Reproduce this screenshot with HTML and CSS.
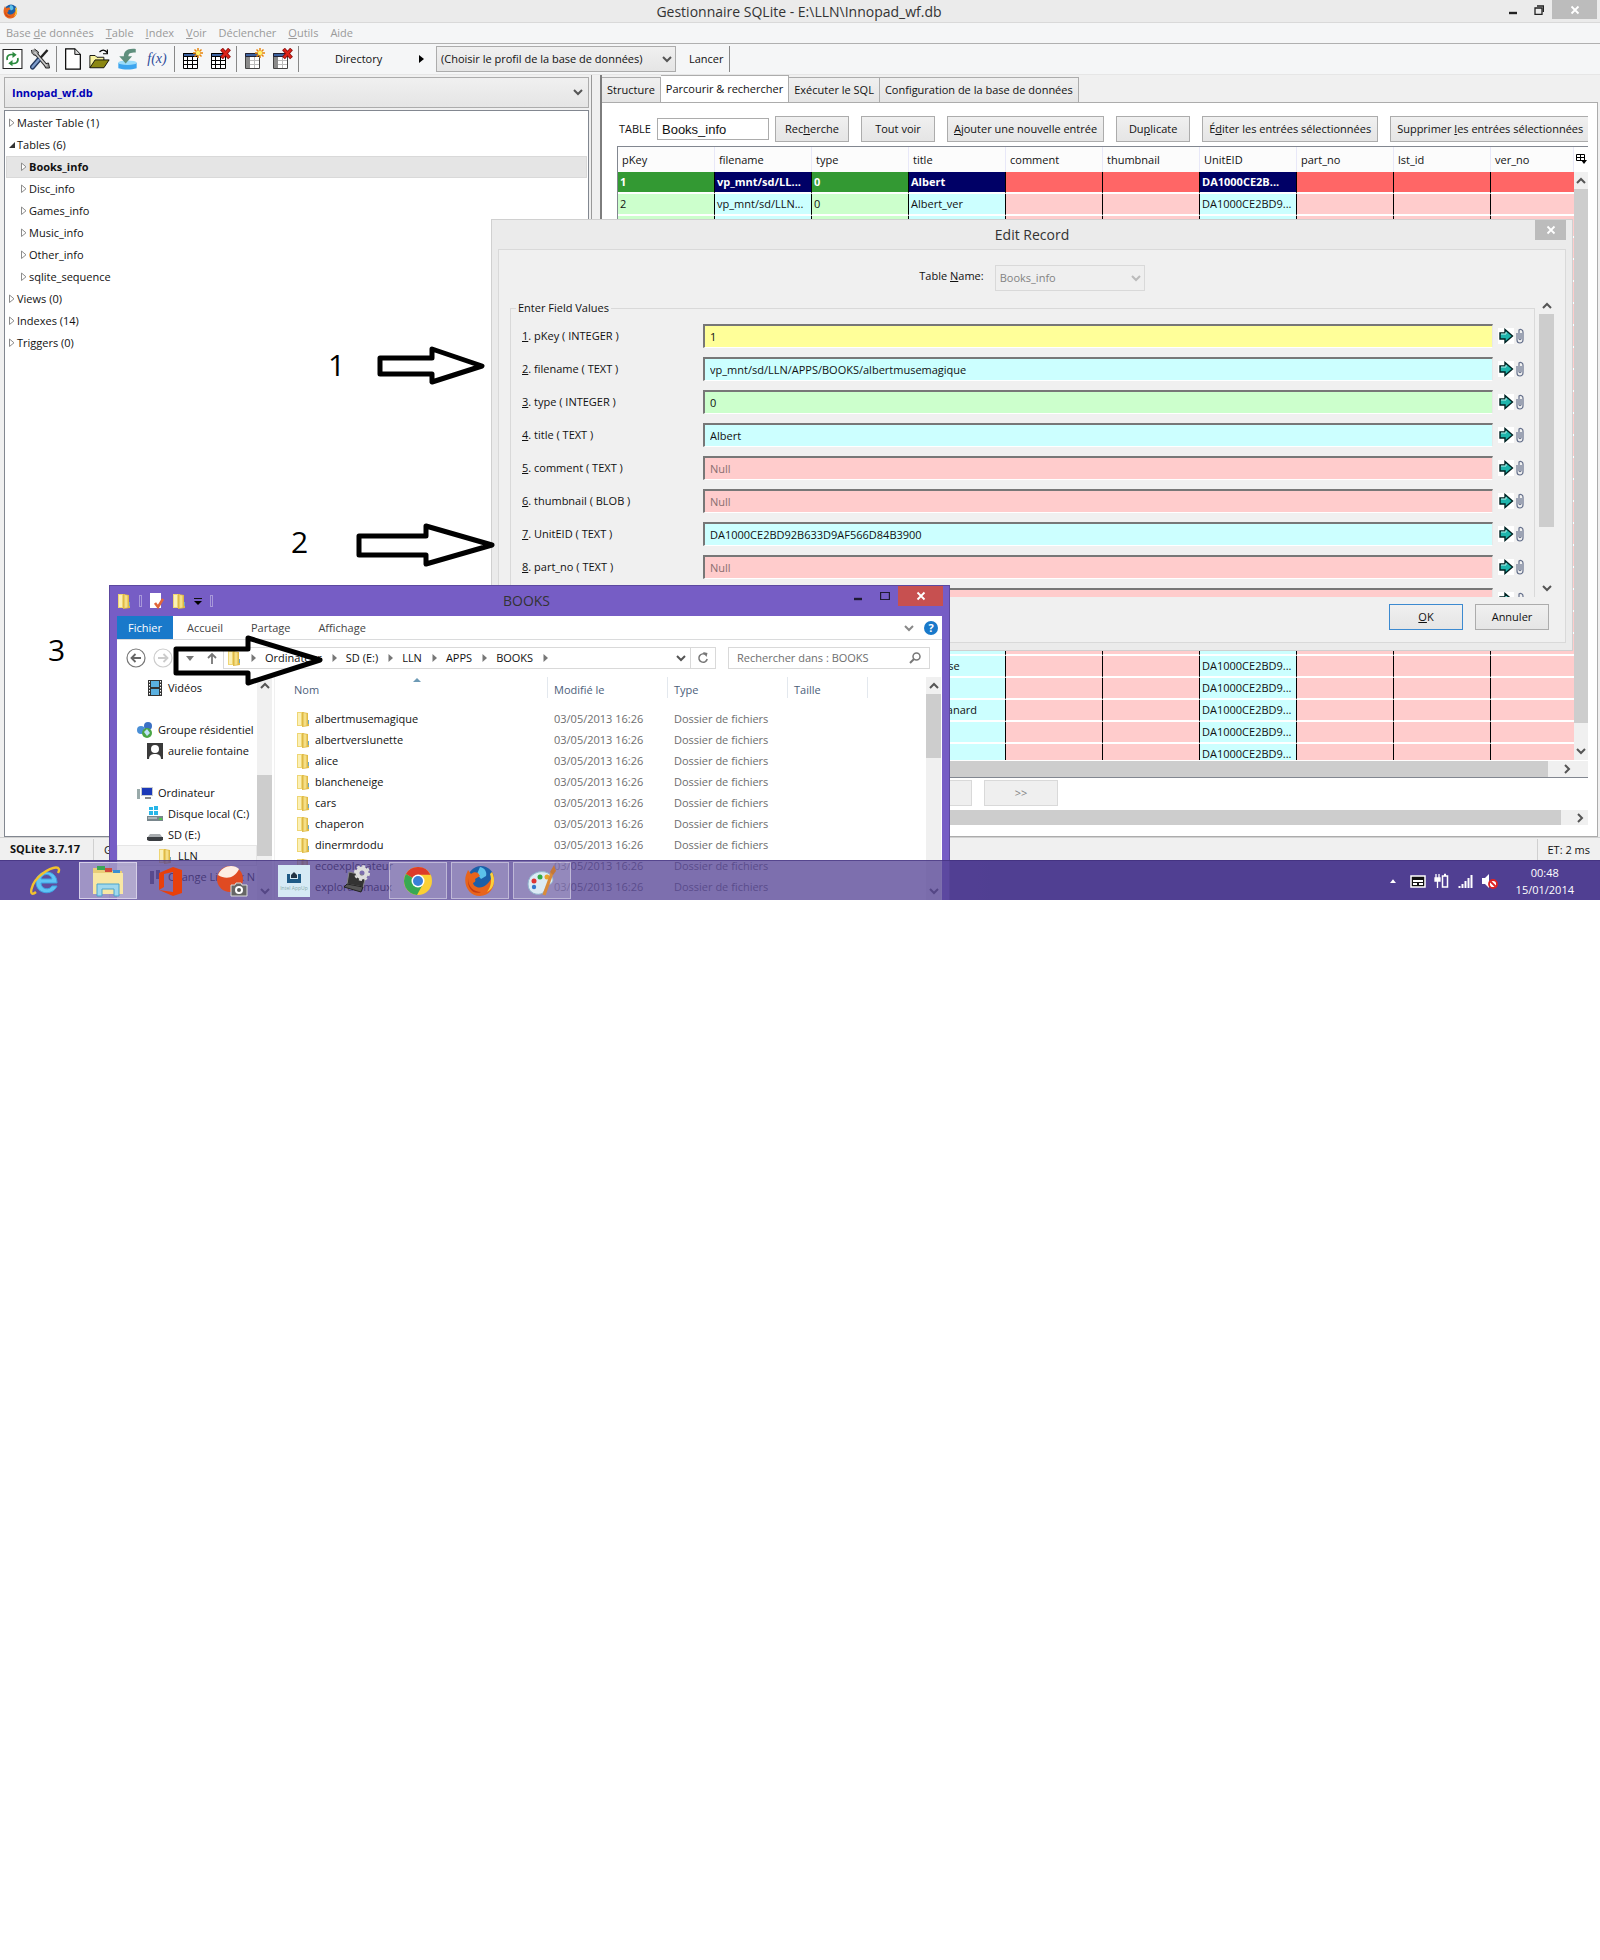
FILE: index.html
```html
<!DOCTYPE html>
<html lang="fr">
<head>
  <meta charset="UTF-8" />
  <meta name="viewport" content="width=device-width, initial-scale=1.0" />
  <title>Gestionnaire SQLite</title>
  <link rel="stylesheet" href="styles.css">
</head>
<body>

  <!-- shared icons -->
  <svg class="sprite" aria-hidden="true">
    <symbol id="chev-down" viewBox="0 0 10 10"><path d="M1 3l4 4 4-4" fill="none" stroke="currentColor" stroke-width="2"/></symbol>
    <symbol id="chev-up" viewBox="0 0 10 10"><path d="M1 7l4-4 4 4" fill="none" stroke="currentColor" stroke-width="2"/></symbol>
    <symbol id="chev-right" viewBox="0 0 10 10"><path d="M3 1l4 4-4 4" fill="none" stroke="currentColor" stroke-width="2"/></symbol>
    <symbol id="cross" viewBox="0 0 10 10"><path d="M1.500 1.500l7 7M8.500 1.500l-7 7" stroke="currentColor" stroke-width="1.800"/></symbol>
    <symbol id="minimize" viewBox="0 0 10 10"><path d="M1 8h8" stroke="currentColor" stroke-width="2.400"/></symbol>
    <symbol id="twisty" viewBox="0 0 6 10"><path d="M.5 1v7.500L5 4.800z" fill="#fff" stroke="#8c8c8c"/></symbol>
    <symbol id="twisty-open" viewBox="0 0 6 10"><path d="M6 2v6H0z" fill="#333"/></symbol>
    <symbol id="crumb" viewBox="0 0 5 8"><path d="M.5 0v8L5 4z" fill="#777"/></symbol>
    <symbol id="folder" viewBox="0 0 14 16">
      <path d="M1 1h7v14H1z" fill="#efd674"/><path d="M2 2h3v12H2z" fill="#fbf0b6"/>
      <path d="M6 1l6 1v7h1v6l-7 1z" fill="#dfb945"/><path d="M7.500 2l3 .5v12l-3 .5z" fill="#f5df86"/>
      <path d="M12.500 9v4" stroke="#6fa9c4"/>
    </symbol>
    <symbol id="firefox" viewBox="0 0 32 32">
      <circle cx="17" cy="14" r="13" fill="#1c5fa8"/><path d="M16 2c5 1 7 5 6 9l-5 3-4-5z" fill="#5cc2ea"/>
      <path d="M28 7c5 10 1 23-12 24C5 31-1 20 2 10l2-5 3 4c2-2 5-2 7-1l2 3-5 3c1 2 0 3-2 4 1 5 9 6 13 2 5-4 6-8 6-13z" fill="#e8641b"/>
      <path d="M28 7c4 8 2 17-5 20 4-5 5-12 3-18z" fill="#fbd03b"/>
      <path d="M4 13c0 9 6 14 13 14-6 3-14-2-13-14z" fill="#c43a12"/>
    </symbol>
    <symbol id="grid-icon" viewBox="0 0 21 22">
      <path d="M1.500 5.500h14v15h-14z" fill="#fff" stroke="#000"/>
      <path d="M1.500 5.500h14v3h-14z" fill="#3c62a0" stroke="#000"/>
      <path d="M1 12.500h15M1 16.500h15M5.500 9v12M10.500 9v12" stroke="#000"/>
    </symbol>
    <symbol id="col-icon" viewBox="0 0 21 22">
      <path d="M1.500 5.500h14v15h-14z" fill="#fff" stroke="#444"/>
      <path d="M1.500 5.500h14v3h-14z" fill="#3c62a0" stroke="#223"/>
      <path d="M2 9h4v11H2z" fill="#8a8a8a"/>
      <path d="M6 12.500h9M6 16.500h9M10.500 9v11" stroke="#bbb"/>
    </symbol>
    <symbol id="spark" viewBox="0 0 21 22"><path d="M16 0v10M11 5h10M12.500 1.500l7 7M19.500 1.500l-7 7" stroke="#e8850c" stroke-width="1.500"/><circle cx="16" cy="5" r="2.200" fill="#fff36b"/></symbol>
    <symbol id="redx" viewBox="0 0 21 22"><path d="M11.500 1l8 9M19.500 1l-8 9" stroke="#8a0d0d" stroke-width="3.800"/><path d="M12 1.500l7 8M19 1.500l-7 8" stroke="#dc2418" stroke-width="2.200"/></symbol>
    <symbol id="go" viewBox="0 0 16 16">
      <path d="M0 0h16v16H0z" fill="#fff"/>
      <path d="M2 5h5V1.500L14.500 8 7 14.500V11H2z" fill="#1fb5ac" stroke="#022" stroke-width="1.400"/>
      <path d="M3 6h5V4" fill="none" stroke="#b5f3ee"/>
    </symbol>
    <symbol id="clip" viewBox="0 0 8 16"><path d="M1 5v7a3 3 0 006 0V4a2.500 2.500 0 00-4-2v9a1.200 1.200 0 002 0V5" fill="none" stroke="#66718c" stroke-width="1.200"/></symbol>
  </svg>

  <div class="desktop">

    <!-- main window -->
    <div class="app">
      <header class="titlebar">
        <svg class="app-icon"><use href="#firefox"/></svg>
        <h1>Gestionnaire SQLite - E:\LLN\Innopad_wf.db</h1>
        <div class="caption">
          <button aria-label="Réduire"><svg class="i10"><use href="#minimize"/></svg></button>
          <button aria-label="Restaurer"><svg class="i10" viewBox="0 0 10 10"><path d="M1 3h7v6.500H1z M3 1h6.500v6" fill="none" stroke="currentColor" stroke-width="1.300"/></svg></button>
          <button class="close" aria-label="Fermer"><svg class="i10"><use href="#cross"/></svg></button>
        </div>
      </header>

      <nav class="menubar">
        <a href="#">Base <u>d</u>e données</a>
        <a href="#"><u>T</u>able</a>
        <a href="#"><u>I</u>ndex</a>
        <a href="#"><u>V</u>oir</a>
        <a href="#">Déclencher</a>
        <a href="#"><u>O</u>utils</a>
        <a href="#">Aide</a>
      </nav>

      <div class="toolbar">
        <div class="tools first">
          <button aria-label="Actualiser"><svg viewBox="0 0 20 20"><path d="M1 1h18v18H1z" fill="#fff" stroke="#222"/><path d="M5 11c-1-4 2-6 6-5M15 9c1 4-2 6-6 5" fill="none" stroke="#2b8a3e" stroke-width="1.600"/><path d="M10 3l4 3-4 3zM10 11l-4 3 4 3z" fill="#2b8a3e"/></svg></button>
          <button aria-label="Options"><svg viewBox="0 0 20 22"><path d="M4 4l12 14" stroke="#333" stroke-width="3.600"/><path d="M1 2c0 4 2 6 6 5l1-3-4-3M14 16l1 4 4 0-1-5z" fill="#999" stroke="#222"/><path d="M17 2L9 11" stroke="#222" stroke-width="2.400"/><path d="M8 12l-6 7" stroke="#23395f" stroke-width="5" stroke-linecap="round"/><path d="M8 12l-6 7" stroke="#7d9ccb" stroke-width="2.400" stroke-linecap="round"/><path d="M4 4l12 14" stroke="#ccc" stroke-width="1.600"/></svg></button>
        </div>
        <div class="tools">
          <button class="w18" aria-label="Nouvelle base"><svg viewBox="0 0 18 24"><path d="M1 1h10l6 6v16H1z" fill="#fff" stroke="#000" stroke-width="1.300"/><path d="M11 1v6h6" fill="#ddd" stroke="#000"/></svg></button>
          <button aria-label="Ouvrir"><svg viewBox="0 0 24 24"><path d="M1 22V8h6l2 2h8v4" fill="#f8f3a0" stroke="#000"/><path d="M1 22l6-9h16l-6 9z" fill="#8b8712" stroke="#000"/><path d="M12 4c3-3 6-3 9 1M21 1v5h-5" fill="none" stroke="#000" stroke-width="1.300"/></svg></button>
          <button aria-label="Importer"><svg viewBox="0 0 20 24"><path d="M0 16h20v6c-6 2-14 2-20 0z" fill="#3da5ef"/><ellipse cx="10" cy="16" rx="10" ry="2.500" fill="#9adcfb"/><path d="M19 1C9 0 6 4 6 9H1l7 8 7-8h-4c0-3 2-4 8-4z" fill="#5f8f7d"/></svg></button>
          <button class="fx" aria-label="Fonctions">f(x)</button>
        </div>
        <div class="tools">
          <button aria-label="Créer une table"><svg><use href="#grid-icon"/><use href="#spark"/></svg></button>
          <button aria-label="Supprimer la table"><svg><use href="#grid-icon"/><use href="#redx"/></svg></button>
        </div>
        <div class="tools">
          <button aria-label="Créer un index"><svg><use href="#col-icon"/><use href="#spark"/></svg></button>
          <button aria-label="Supprimer l'index"><svg><use href="#col-icon"/><use href="#redx"/></svg></button>
        </div>
        <div class="directory">
          <label for="profile">Directory</label>
          <svg class="play" viewBox="0 0 5 8"><path d="M0 0v8l5-4z"/></svg>
          <span class="select profile">
            <select id="profile"><option>(Choisir le profil de la base de données)</option></select>
            <svg class="i10"><use href="#chev-down"/></svg>
          </span>
          <button class="launch">Lancer</button>
        </div>
      </div>

      <div class="workspace">
        <aside class="side">
          <span class="select db">
            <select aria-label="Base"><option>Innopad_wf.db</option></select>
            <svg class="i10"><use href="#chev-down"/></svg>
          </span>
          <ul class="tree">
            <li><svg><use href="#twisty"/></svg>Master Table (1)</li>
            <li><svg><use href="#twisty-open"/></svg>Tables (6)</li>
            <li class="child selected"><svg><use href="#twisty"/></svg>Books_info</li>
            <li class="child"><svg><use href="#twisty"/></svg>Disc_info</li>
            <li class="child"><svg><use href="#twisty"/></svg>Games_info</li>
            <li class="child"><svg><use href="#twisty"/></svg>Music_info</li>
            <li class="child"><svg><use href="#twisty"/></svg>Other_info</li>
            <li class="child"><svg><use href="#twisty"/></svg>sqlite_sequence</li>
            <li><svg><use href="#twisty"/></svg>Views (0)</li>
            <li><svg><use href="#twisty"/></svg>Indexes (14)</li>
            <li><svg><use href="#twisty"/></svg>Triggers (0)</li>
          </ul>
        </aside>
        <div class="splitter"></div>

        <main class="content">
          <div class="tabs">
            <button>Structure</button>
            <button class="active">Parcourir &amp; rechercher</button>
            <button>Exécuter le SQL</button>
            <button>Configuration de la base de données</button>
          </div>
          <div class="panel">
            <div class="actions">
              <label for="tableName">TABLE</label>
              <input id="tableName" type="text" value="Books_info">
              <button class="btn">Rec<u>h</u>erche</button>
              <button class="btn">Tout voir</button>
              <button class="btn"><u>A</u>jouter une nouvelle entrée</button>
              <button class="btn">Du<u>p</u>licate</button>
              <button class="btn">É<u>d</u>iter les entrées sélectionnées</button>
              <button class="btn">Supprimer <u>l</u>es entrées sélectionnées</button>
            </div>
            <div class="grid">
              <div class="grid-view">
                <table>
                  <thead>
                    <tr><th>pKey</th><th>filename</th><th>type</th><th>title</th><th>comment</th><th>thumbnail</th><th>UnitEID</th><th>part_no</th><th>lst_id</th><th class="last">ver_no</th></tr>
                  </thead>
                  <tbody id="records"></tbody>
                </table>
                <div class="grid-side">
                  <svg class="picker" viewBox="0 0 11 10"><path d="M.5.500h8v6h-8zM.5 3.500h8M4.500 1v6" fill="none" stroke="#000"/><path d="M5 6h6L8 10z"/></svg>
                  <div class="vscroll">
                    <svg class="i10"><use href="#chev-up"/></svg>
                    <div class="thumb"></div>
                    <svg class="i10"><use href="#chev-down"/></svg>
                  </div>
                </div>
              </div>
              <div class="hscroll"><div class="thumb"></div><svg class="i10"><use href="#chev-right"/></svg></div>
            </div>
            <div class="pager">
              <button class="btn" disabled>&lt;&lt;</button>
              <button class="btn" disabled>&lt;</button>
              <button class="btn" disabled>&gt;</button>
              <button class="btn" disabled>&gt;&gt;</button>
            </div>
            <div class="hscroll outer"><div class="thumb"></div><svg class="i10"><use href="#chev-right"/></svg></div>
          </div>
        </main>
      </div>

      <footer class="status">
        <strong>SQLite 3.7.17</strong>
        <span class="gecko">Gecko</span>
        <span class="et">ET: 2 ms</span>
      </footer>
    </div>

    <!-- edit record dialog -->
    <div class="dialog" role="dialog" aria-label="Edit Record">
      <div class="dialog-title">
        <h2>Edit Record</h2>
        <button class="close" aria-label="Fermer"><svg class="i10"><use href="#cross"/></svg></button>
      </div>
      <div class="dialog-body">
        <div class="table-name">
          <label for="recTable">Table <u>N</u>ame:</label>
          <span class="select">
            <select id="recTable" disabled><option>Books_info</option></select>
            <svg class="i10"><use href="#chev-down"/></svg>
          </span>
        </div>
        <div class="fields-view">
          <fieldset>
            <legend>Enter Field Values</legend>
            <div id="fields"></div>
          </fieldset>
          <div class="vscroll">
            <svg class="i10"><use href="#chev-up"/></svg>
            <div class="thumb"></div>
            <svg class="i10"><use href="#chev-down"/></svg>
          </div>
        </div>
        <div class="dialog-buttons">
          <button class="btn default"><u>O</u>K</button>
          <button class="btn">Annuler</button>
        </div>
      </div>
    </div>

    <!-- explorer window -->
    <div class="explorer">
      <div class="ex-title">
        <div class="quick">
          <svg class="fold"><use href="#folder"/></svg><i></i>
          <svg class="fold" viewBox="0 0 14 16"><path d="M0 0h11v15H0z" fill="#fff"/><path d="M5 10l3 4 5-8" fill="none" stroke="#e0653a" stroke-width="2.600"/></svg>
          <svg class="fold"><use href="#folder"/></svg>
          <svg class="menu-caret" viewBox="0 0 8 7"><path d="M0 .5h8" stroke="#111"/><path d="M0 3h8L4 7z"/></svg><i></i>
        </div>
        <h2>BOOKS</h2>
        <div class="ex-caption">
          <button aria-label="Réduire"><svg class="i10"><use href="#minimize"/></svg></button>
          <button aria-label="Agrandir"><svg class="i10" viewBox="0 0 10 10"><path d="M.6 1.500h8.800v7H.6z" fill="none" stroke="currentColor" stroke-width="1.200"/></svg></button>
          <button class="close" aria-label="Fermer"><svg class="i10"><use href="#cross"/></svg></button>
        </div>
      </div>
      <div class="ex-body">
        <div class="ribbon">
          <button class="file">Fichier</button>
          <button>Accueil</button>
          <button>Partage</button>
          <button>Affichage</button>
          <svg class="i10 expand"><use href="#chev-down"/></svg>
          <span class="help">?</span>
        </div>
        <div class="address-row">
          <svg class="nav-btn" viewBox="0 0 20 20"><circle cx="10" cy="10" r="9" fill="none" stroke="#777" stroke-width="1.200"/><path d="M15 10H6M9.500 6L5.500 10l4 4" fill="none" stroke="#666" stroke-width="1.800"/></svg>
          <svg class="nav-btn" viewBox="0 0 20 20"><circle cx="10" cy="10" r="9" fill="none" stroke="#ccc" stroke-width="1.200"/><path d="M5 10h9M10.500 6l4 4-4 4" fill="none" stroke="#ccc" stroke-width="1.800"/></svg>
          <svg class="down" viewBox="0 0 8 5"><path d="M0 0h8L4 5z" fill="#777"/></svg>
          <svg class="up" viewBox="0 0 10 12"><path d="M5 12V2M1 6l4-4 4 4" fill="none" stroke="#777" stroke-width="1.800"/></svg>
          <div class="address">
            <svg class="fold"><use href="#folder"/></svg>
            <svg class="crumb"><use href="#crumb"/></svg><a href="#">Ordinateur</a>
            <svg class="crumb"><use href="#crumb"/></svg><a href="#">SD (E:)</a>
            <svg class="crumb"><use href="#crumb"/></svg><a href="#">LLN</a>
            <svg class="crumb"><use href="#crumb"/></svg><a href="#">APPS</a>
            <svg class="crumb"><use href="#crumb"/></svg><a href="#">BOOKS</a>
            <svg class="crumb"><use href="#crumb"/></svg>
            <svg class="i10 history"><use href="#chev-down"/></svg>
            <button class="reload" aria-label="Actualiser"><svg viewBox="0 0 12 12"><path d="M9 3A4.200 4.200 0 1010.200 7" fill="none" stroke="#777" stroke-width="1.500"/><path d="M6 0l4.500 1-1 4z" fill="#777"/></svg></button>
          </div>
          <div class="search">
            <input type="text" aria-label="Rechercher" placeholder="Rechercher dans : BOOKS">
            <svg viewBox="0 0 12 12"><circle cx="7.500" cy="4.500" r="3.500" fill="none" stroke="#777" stroke-width="1.500"/><path d="M5 7L1 11" stroke="#777" stroke-width="2"/></svg>
          </div>
        </div>
        <div class="ex-main">
          <ul class="places">
            <li class="l2"><svg viewBox="0 0 16 16"><path d="M1 0h14v16H1z" fill="#333"/><path d="M4 1h8v6H4zM4 9h8v6H4z" fill="#5ab0e0"/><path d="M2.500 1v14M13.500 1v14" stroke="#fff" stroke-dasharray="1.500 1.500"/></svg>Vidéos</li>
            <li></li>
            <li class="l1"><svg viewBox="0 0 16 16"><circle cx="11" cy="4" r="4" fill="#3a70c4"/><circle cx="4" cy="8" r="4" fill="#4a8fd6"/><circle cx="10" cy="11" r="5" fill="#4aa545"/><path d="M7 10l3-3 3 4-3 3z" fill="#bfe3f7"/></svg>Groupe résidentiel</li>
            <li class="l2"><svg viewBox="0 0 16 16"><path d="M0 0h16v16H0z" fill="#3a3a3a"/><circle cx="8" cy="6" r="4" fill="#fff"/><path d="M2 16c0-4 3-5 6-5s6 1 6 5z" fill="#fff"/></svg>aurelie fontaine</li>
            <li></li>
            <li class="l1"><svg viewBox="0 0 16 16"><path d="M4 2h12v9H4z" fill="#c8ccd0"/><path d="M5 3h10v7H5z" fill="#1c39b8"/><path d="M8 12h6v2H8z" fill="#888"/><path d="M0 4h3v10H0z" fill="#9aa"/></svg>Ordinateur</li>
            <li class="l2"><svg viewBox="0 0 16 16"><path d="M2 1h4v3H2zM7 0h4v4H7zM2 5h4v4H2zM7 5h4v4H7z" fill="#28b6e8"/><path d="M0 10h16v5H0z" fill="#79868c"/><path d="M1 12h9" stroke="#dfe6e8"/><path d="M12 12h3v2h-3z" fill="#4cc94c"/></svg>Disque local (C:)</li>
            <li class="l2"><svg viewBox="0 0 16 16"><path d="M3 7h10l3 4H0z" fill="#a9adb0"/><path d="M0 10h16v3l-2 1H2l-2-1z" fill="#3b3e42"/></svg>SD (E:)</li>
            <li class="l3 current"><svg><use href="#folder"/></svg>LLN</li>
            <li class="l2"><svg viewBox="0 0 16 16"><path d="M3 2h4v13H3zM9 1h4v9H9z" fill="#667"/></svg>Change Linbox N</li>
          </ul>
          <div class="vscroll places-scroll">
            <svg class="i10"><use href="#chev-up"/></svg>
            <div class="thumb"></div>
            <svg class="i10"><use href="#chev-down"/></svg>
          </div>
          <div class="files">
            <svg class="sort" viewBox="0 0 8 4"><path d="M0 4h8L4 0z" fill="#6d9ab5"/></svg>
            <table>
              <thead><tr><th>Nom</th><th>Modifié le</th><th>Type</th><th>Taille</th><th></th></tr></thead>
              <tbody id="files"></tbody>
            </table>
          </div>
          <div class="vscroll files-scroll">
            <svg class="i10"><use href="#chev-up"/></svg>
            <div class="thumb"></div>
            <svg class="i10"><use href="#chev-down"/></svg>
          </div>
        </div>
      </div>
    </div>

    <!-- taskbar -->
    <div class="taskbar">
      <div class="apps">
        <button aria-label="Internet Explorer"><svg viewBox="0 0 32 32"><path d="M27 18H11c0 6 8 8 11 3h5C23 31 6 30 6 17 6 4 27 3 27 18zM11 14h11c-1-6-10-6-11 0z" fill="#5fc4f5" stroke="#3fa4e4"/><path d="M6 27c-8 7-6-9 6-18S32 1 28 8" fill="none" stroke="#f3c22d" stroke-width="2.400"/></svg></button>
        <button class="open active" aria-label="Explorateur"><svg viewBox="0 0 32 32"><path d="M1 3h10l2 3h17v23H1z" fill="#e9cd77"/><path d="M5 1h8v4H5z" fill="#3aa655"/><path d="M13 3h7v4h-7z" fill="#d04a3a"/><path d="M21 5h7v3h-7z" fill="#3b8fd0"/><path d="M1 8h30v21H1z" fill="#f8e7a4"/><path d="M5 31V19h22v12h-5v-7H10v7z" fill="#9fd8ee" stroke="#4ba3cc"/></svg></button>
        <button aria-label="Office"><svg viewBox="0 0 32 32"><path d="M5 8L19 2l9 3v23l-9 3L5 25l14 2V7L10 9v13l-5 3z" fill="#e8400c"/></svg></button>
        <button aria-label="Capture"><svg viewBox="0 0 32 32"><circle cx="14" cy="14" r="13" fill="#e04a22"/><path d="M2 10C6 0 18-1 23 4c-4 9-13 11-21 6z" fill="#fdeee4"/><path d="M15 20h4l1-2h5l1 2h5v11H15z" fill="#666" stroke="#ddd"/><circle cx="23" cy="25" r="4" fill="#fff"/><circle cx="23" cy="25" r="2" fill="#555"/></svg></button>
        <button aria-label="Intel AppUp"><svg viewBox="0 0 32 32"><path d="M0 0h32v32H0z" fill="#d6eaf5"/><path d="M9 9h14v9H9z" fill="#1d5a86"/><path d="M12 9h8v5h-8z" fill="#d6eaf5"/><path d="M13 10l3-3 3 3v3h-6z" fill="#234"/><text x="16" y="25" font-size="5" text-anchor="middle" fill="#8aa">Intel AppUp</text></svg></button>
        <button aria-label="Ordinateur"><svg viewBox="0 0 32 32"><path d="M9 7l17 4-3 11-16-3z" fill="#333" stroke="#888"/><path d="M7 19l16 3-2 5-17-5z" fill="#555" stroke="#222"/><circle cx="22" cy="8" r="4.500" fill="none" stroke="#ddd" stroke-width="4"/><circle cx="22" cy="8" r="7" fill="none" stroke="#ddd" stroke-width="2" stroke-dasharray="3 2.500"/></svg></button>
        <button class="open" aria-label="Chrome"><svg viewBox="0 0 32 32"><circle cx="16" cy="16" r="14" fill="#fbd034"/><path d="M16 16L3.900 9A14 14 0 0128.500 9.800H16z" fill="#dd3b2a"/><path d="M16 16L3.900 9A14 14 0 0015 30l6-11z" fill="#38a852"/><circle cx="16" cy="16" r="6.500" fill="#fff"/><circle cx="16" cy="16" r="5" fill="#3a80d8"/></svg></button>
        <button class="open" aria-label="Firefox"><svg><use href="#firefox"/></svg></button>
        <button class="open" aria-label="Paint"><svg viewBox="0 0 32 32"><path d="M2 19C2 9 14 4 22 8c8 5 5 11 0 12-3 1-2 5-5 8-5 3-15 1-15-9z" fill="#dcebf5" stroke="#8fb3cc"/><circle cx="8" cy="16" r="2.500" fill="#d33"/><circle cx="14" cy="12" r="2.500" fill="#3a4"/><circle cx="21" cy="12" r="2.500" fill="#e9a32b"/><circle cx="8" cy="22" r="2.200" fill="#37c"/><path d="M18 30L26 8" stroke="#d98b3a" stroke-width="3.200"/><path d="M24 7l4-7 2 6-3 4z" fill="#c4783a"/></svg></button>
      </div>
      <div class="tray">
        <svg class="tray-caret" viewBox="0 0 8 5"><path d="M0 5h8L4 0z" fill="#fff"/></svg>
        <svg viewBox="0 0 16 16"><path d="M1 3h14v11H1z" fill="#111" stroke="#fff" stroke-width="1.500"/><path d="M3 8h10M3 11h4M9 11h4" stroke="#fff" stroke-width="1.800"/></svg>
        <svg viewBox="0 0 16 16"><path d="M2 1v4M5 1v4M1 5h5v3H1zM3.500 8v7" fill="#fff" stroke="#fff" stroke-width="1.300"/><path d="M8.500 3h5v11h-5zM10 1.500h2" fill="none" stroke="#fff" stroke-width="1.500"/></svg>
        <svg viewBox="0 0 16 16"><path d="M1.500 13v2M4.500 11v4M7.500 8v7M10.500 5v10M13.500 2v13" stroke="#fff" stroke-width="2"/></svg>
        <svg viewBox="0 0 16 16"><path d="M0 5h3l4-4v14l-4-4H0z" fill="#fff"/><circle cx="11" cy="11" r="4" fill="#fff" stroke="#d22" stroke-width="1.800"/><path d="M8.500 8.500l5 5" stroke="#d22" stroke-width="1.800"/></svg>
        <div class="clock">00:48<br>15/01/2014</div>
      </div>
    </div>

    <!-- numbered pointers -->
    <span class="mark mark1">1</span>
    <span class="mark mark2">2</span>
    <span class="mark mark3">3</span>
    <svg class="pointer pointer1" viewBox="0 0 110 40"><path d="M3 12h52V3l50 17-50 16v-8H3z"/></svg>
    <svg class="pointer pointer2" viewBox="0 0 140 44"><path d="M3 13h67V3l66 19-66 19v-9H3z"/></svg>
    <svg class="pointer pointer3" viewBox="0 0 150 52"><path d="M3 14h72V3l72 22-72 23V38H3z"/></svg>
  </div>

  <script>
    // records grid: one kind per column
    const kinds = ["int", "text", "int", "text", "null", "null", "text", "null", "null", "null"];
    const titles = { 1: "Albert", 2: "Albert_ver", 23: "Princesse", 25: "Vilain canard" };
    let rows = "";
    for (let n = 1; n <= 27; n++) {
      const cells = [n, n === 1 ? "vp_mnt/sd/LL..." : "vp_mnt/sd/LLN...", 0, titles[n] || "", "", "",
        n === 1 ? "DA1000CE2B..." : "DA1000CE2BD9...", "", "", ""];
      rows += `<tr${n === 1 ? ' class="selected"' : ""}>` +
        cells.map((c, i) => `<td class="${kinds[i]}">${c}</td>`).join("") + "</tr>";
    }
    document.getElementById("records").innerHTML = rows;

    // edit form
    const fields = [
      ["pKey", "INTEGER", "1", "key"],
      ["filename", "TEXT", "vp_mnt/sd/LLN/APPS/BOOKS/albertmusemagique", "text"],
      ["type", "INTEGER", "0", "int"],
      ["title", "TEXT", "Albert", "text"],
      ["comment", "TEXT", "", "null"],
      ["thumbnail", "BLOB", "", "null"],
      ["UnitEID", "TEXT", "DA1000CE2BD92B633D9AF566D84B3900", "text"],
      ["part_no", "TEXT", "", "null"],
      ["lst_id", "TEXT", "", "null"]
    ];
    document.getElementById("fields").innerHTML = fields.map(([name, type, value, kind], i) => `
      <div class="field">
        <label for="f${i}"><u>${i + 1}</u>. ${name} ( ${type} )</label>
        <input id="f${i}" type="text" class="${kind}" value="${value}" placeholder="Null">
        <svg class="go"><use href="#go"/></svg>
        <svg class="clip"><use href="#clip"/></svg>
      </div>`).join("");

    // explorer list
    const folders = ["albertmusemagique", "albertverslunette", "alice", "blancheneige", "cars",
      "chaperon", "dinermrdodu", "ecoexplorateur", "exploranimaux"];
    document.getElementById("files").innerHTML = folders.map(f => `
      <tr><td class="name"><svg class="fold"><use href="#folder"/></svg>${f}</td>
      <td>03/05/2013 16:26</td><td>Dossier de fichiers</td><td></td><td></td></tr>`).join("");
  </script>

</body>
</html>
```
FILE: styles.css
```css
* {
  box-sizing: border-box;
}

body {
  margin: 0;
  background: #fff;
  color: #111;
  font-family: "Open Sans", "Noto Sans", sans-serif;
  font-size: 11px;
  line-height: 16px;
}

button, input, select {
  font: inherit;
  color: inherit;
  margin: 0;
}

button {
  padding: 0;
  border: 0;
  background: none;
  white-space: nowrap;
}

a {
  color: inherit;
  text-decoration: none;
}

ul {
  list-style: none;
  margin: 0;
  padding: 0;
}

h1, h2 {
  margin: 0;
  font-size: 14px;
  font-weight: normal;
  color: #333;
}

svg {
  display: block;
  flex: none;
}

.sprite {
  position: absolute;
  width: 0;
  height: 0;
}

.i10 {
  width: 10px;
  height: 10px;
  color: #555;
}

.fold {
  width: 14px;
  height: 16px;
}

.desktop {
  position: relative;
  overflow: hidden;
  background: linear-gradient(to right, #8474bb, #8474bb 8%, #46368c 62%, #46368c);
}

/* main window */
.app {
  background: #f0f0f0;
}

.titlebar {
  position: relative;
  display: flex;
  align-items: center;
  justify-content: center;
  height: 23px;
  padding: 1px 2px 0 0;
  background: #ebebeb;
  border-bottom: 1px solid #d9d9d9;
}

.app-icon {
  position: absolute;
  left: 3px;
  top: 4px;
  width: 15px;
  height: 15px;
}

.caption {
  position: absolute;
  right: 3px;
  top: 0;
  display: flex;
  align-items: center;
}

.caption button {
  display: flex;
  align-items: center;
  justify-content: center;
  width: 26px;
  height: 19px;
}

.caption .i10 {
  color: #222;
}

.caption .close {
  width: 45px;
  background: #bcbcbc;
}

.caption .close .i10, .dialog .close .i10 {
  color: #fff;
}

.menubar {
  display: flex;
  align-items: center;
  gap: 12px;
  height: 21px;
  padding-left: 6px;
  background: #f5f6f7;
  border-bottom: 1px solid #b0b0b0;
  color: #9a9a9a;
}

.toolbar {
  display: flex;
  align-items: center;
  height: 31px;
  background: #f5f6f7;
  border-bottom: 1px solid #e6e6e6;
}

.tools {
  display: flex;
  align-items: center;
  gap: 7px;
  height: 26px;
  padding: 0 5px 0 7px;
  border-right: 1px solid #888;
}

.tools.first {
  padding-left: 2px;
}

.tools button, .tools svg {
  width: 21px;
  height: 22px;
}

.tools .w18, .tools .w18 svg {
  width: 18px;
}

.tools .fx {
  font: italic 14px "Liberation Serif", serif;
  color: #2c4a9a;
  width: 24px;
}

.directory {
  display: flex;
  align-items: center;
  height: 26px;
  padding: 0 5px 0 36px;
  border-right: 1px solid #888;
}

.directory label {
  width: 84px;
}

.play {
  width: 5px;
  height: 8px;
  margin-right: 12px;
}

.launch {
  margin-left: 13px;
}

.select {
  position: relative;
  display: block;
}

.select select {
  appearance: none;
  width: 100%;
  height: 26px;
  padding: 0 4px;
  border: 1px solid #acacac;
  border-radius: 0;
  background: linear-gradient(#f0f0f0, #e5e5e5);
}

.select .i10 {
  position: absolute;
  right: 4px;
  top: 8px;
}

.profile {
  width: 240px;
}

.workspace {
  display: flex;
}

.side {
  display: flex;
  flex-direction: column;
  flex: 0 0 590px;
  padding: 2px 1px 0 4px;
}

.db select {
  height: 31px;
  padding: 0 7px;
  font-weight: bold;
  color: #0000b4;
}

.db .i10 {
  right: 6px;
  top: 10px;
}

.tree {
  flex: 1;
  margin-top: 2px;
  padding: 1px;
  background: #fff;
  border: 1px solid #828790;
}

.tree li {
  display: flex;
  align-items: center;
  gap: 2px;
  height: 22px;
  padding-left: 2px;
  border: 1px solid transparent;
}

.tree svg {
  width: 6px;
  height: 10px;
}

.tree .child {
  padding-left: 14px;
}

.tree .selected {
  background: #e5e5e5;
  border-color: #d9d9d9;
  font-weight: bold;
}

.splitter {
  width: 11px;
  margin-left: 1px;
  border-left: 1px solid #999;
  border-right: 2px solid #7d7d7d;
}

.content {
  flex: 1;
  min-width: 0;
  padding-right: 2px;
}

.tabs {
  display: flex;
  align-items: flex-end;
  height: 27px;
}

.tabs button {
  height: 25px;
  padding: 0 5px;
  border: 1px solid #acacac;
  border-bottom: 0;
  border-left-width: 0;
  background: linear-gradient(#f0f0f0, #e5e5e5);
}

.tabs .active {
  height: 27px;
  background: #fff;
}

.panel {
  background: #fff;
  border: 1px solid #acacac;
  border-left: 0;
  padding: 13px 9px 11px 15px;
}

.actions {
  display: flex;
  align-items: center;
  gap: 12px;
  overflow: hidden;
  margin-bottom: 4px;
}

.actions label {
  margin: 0 -6px 0 2px;
}

.actions input {
  flex: none;
  width: 112px;
  height: 22px;
  margin-right: -6px;
  padding: 0 4px;
  border: 1px solid #acacac;
  font: 13px "Liberation Sans", sans-serif;
}

.btn {
  flex: none;
  min-width: 74px;
  height: 26px;
  padding: 0 6px;
  border: 1px solid #acacac;
  background: linear-gradient(#f0f0f0, #e5e5e5);
}

.btn:disabled {
  border-color: #d9d9d9;
  background: #efefef;
  color: #838383;
}

.grid {
  border: 1px solid #828790;
  border-right: 0;
}

.grid-view {
  display: flex;
  height: 613px;
  overflow: hidden;
}

.grid table {
  flex: 1;
  table-layout: fixed;
  border-collapse: separate;
  border-spacing: 0;
  width: 0;
  height: 0;
}

.grid th {
  width: 97px;
  height: 25px;
  padding: 0 4px;
  border-right: 1px solid #e8e8f8;
  background: #fcfcfc;
  font-weight: normal;
  text-align: left;
}

.grid th.last {
  width: auto;
}

.grid td {
  height: 22px;
  padding: 0 2px;
  border-right: 1px solid #000;
  border-bottom: 2px solid #fff;
  line-height: 20px;
  white-space: nowrap;
  overflow: hidden;
}

.grid td:last-child {
  border-right: 0;
}

.int { background: #ccffcc; }
.text { background: #ccffff; }
.null { background: #ffcccc; }
.key { background: #ffff99; }

.selected td {
  font-weight: bold;
  color: #fff;
}

.selected .int { background: #339933; }
.selected .text { background: #000066; }
.selected .null { background: #ff6666; }

.grid-side {
  display: flex;
  flex-direction: column;
  width: 14px;
}

.picker {
  width: 11px;
  height: 10px;
  margin: 7px 1px 8px 2px;
}

/* scrollbars */
.vscroll {
  display: flex;
  flex-direction: column;
  align-items: center;
  flex: none;
  width: 15px;
  padding: 4px 0;
  background: #f0f0f0;
}

.vscroll .thumb {
  width: 100%;
  margin: 3px 0 auto;
  background: #cdcdcd;
}

.grid-side .vscroll {
  flex: 1;
  width: 14px;
}

.grid-side .thumb {
  height: 534px;
}

.hscroll {
  display: flex;
  align-items: center;
  height: 17px;
  padding-right: 16px;
  background: #f0f0f0;
  border-top: 1px solid #fff;
}

.hscroll .thumb {
  flex: 1;
  align-self: stretch;
  margin-right: 14px;
  background: #cdcdcd;
}

.hscroll.outer {
  height: 15px;
  padding-right: 3px;
  border: 0;
}

.pager {
  display: flex;
  gap: 12px;
  padding: 2px 0 4px 109px;
}

.status {
  display: flex;
  align-items: center;
  height: 23px;
  padding-left: 10px;
  border-top: 1px solid #d0d0d0;
}

.status strong {
  min-width: 74px;
}

.gecko, .et {
  margin-left: 9px;
  padding-left: 10px;
  border-left: 1px solid #d0d0d0;
  line-height: 21px;
}

.et {
  margin-left: auto;
  padding-right: 10px;
}

/* edit record dialog */
.dialog {
  position: absolute;
  left: 491px;
  right: 27px;
  top: 219px;
  padding: 0 6px 7px;
  background: #ebebeb;
  border: 1px solid #d0d0d0;
}

.dialog-title {
  display: flex;
  align-items: center;
  justify-content: center;
  height: 29px;
}

.dialog .close {
  position: absolute;
  right: 6px;
  top: 0;
  display: flex;
  align-items: center;
  justify-content: center;
  width: 31px;
  height: 20px;
  background: #bcbcbc;
}

.dialog-body {
  padding: 15px 11px 12px;
  background: #f0f0f0;
  border: 1px solid #d9d9d9;
}

.table-name {
  display: flex;
  justify-content: center;
  gap: 11px;
}

.table-name label {
  line-height: 22px;
}

.table-name .select {
  width: 150px;
}

.table-name select {
  background: #efefef;
  border-color: #d9d9d9;
  color: #838383;
  opacity: 1;
}

.table-name .i10 {
  color: #bbb;
}

.fields-view {
  display: flex;
  gap: 4px;
  height: 300px;
  margin-top: 6px;
  overflow: hidden;
}

.fields-view .vscroll .thumb {
  height: 213px;
}

fieldset {
  flex: 1;
  margin: 3px 0 0;
  padding: 8px 10px 0 11px;
  border: 1px solid #d9d9d9;
  height: 340px;
}

legend {
  margin-left: -6px;
  padding: 0 2px;
}

.field {
  display: flex;
  align-items: center;
  height: 24px;
  margin-bottom: 9px;
}

.field label {
  width: 181px;
}

.field input {
  flex: 1;
  height: 24px;
  padding: 0 5px;
  border: 1px solid;
  border-width: 2px 1px 1px 2px;
  border-color: #777 #e8e8e8 #fff #777;
}

.field input::placeholder {
  color: #8a6f70;
  opacity: 1;
}

.go {
  width: 16px;
  height: 16px;
  margin: 0 2px 0 5px;
}

.clip {
  width: 8px;
  height: 16px;
}

.dialog-buttons {
  display: flex;
  justify-content: flex-end;
  gap: 12px;
  margin-top: 7px;
  padding-right: 5px;
}

.btn.default {
  border-color: #3c8ad0;
}

/* explorer */
.explorer {
  position: absolute;
  left: 109px;
  top: 585px;
  bottom: 0;
  display: flex;
  flex-direction: column;
  width: 841px;
  padding: 0 7px;
  background: #765dc5;
  border: 1px solid #5c489f;
  border-bottom: 0;
}

.ex-title {
  display: flex;
  align-items: center;
  justify-content: center;
  flex: none;
  height: 30px;
  padding-right: 6px;
}

.quick {
  position: absolute;
  left: 7px;
  top: 7px;
  display: flex;
  align-items: center;
  gap: 8px;
}

.quick i {
  width: 3px;
  height: 12px;
  border: 1px solid #a898da;
}

.menu-caret {
  width: 8px;
  height: 7px;
}

.ex-caption {
  position: absolute;
  right: 6px;
  top: 0;
  display: flex;
}

.ex-caption button {
  display: flex;
  align-items: center;
  justify-content: center;
  width: 27px;
  height: 20px;
}

.ex-caption .i10 {
  color: #1f1a33;
}

.ex-caption .close {
  width: 45px;
  background: #c75050;
}

.ex-caption .close .i10 {
  color: #fff;
}

.ex-body {
  display: flex;
  flex-direction: column;
  flex: 1;
  min-height: 0;
  background: #fff;
}

.ribbon {
  display: flex;
  align-items: center;
  gap: 28px;
  flex: none;
  height: 24px;
  padding-right: 4px;
  border-bottom: 1px solid #dadbdc;
  color: #444;
}

.ribbon .file {
  width: 56px;
  height: 23px;
  margin-right: -14px;
  background: #1979ca;
  color: #fff;
}

.expand {
  margin-left: auto;
  color: #888;
}

.help {
  width: 14px;
  height: 14px;
  margin-left: -18px;
  border-radius: 50%;
  background: #1979ca;
  color: #fff;
  font-weight: bold;
  line-height: 14px;
  text-align: center;
}

.address-row {
  display: flex;
  align-items: center;
  flex: none;
  height: 36px;
  padding: 0 12px 0 9px;
}

.nav-btn {
  width: 20px;
  height: 20px;
  margin-right: 7px;
}

.down {
  width: 8px;
  height: 5px;
  margin: 0 13px 0 6px;
}

.up {
  width: 10px;
  height: 12px;
  margin-right: 6px;
}

.address {
  display: flex;
  align-items: center;
  flex: 1;
  height: 22px;
  padding-left: 3px;
  border: 1px solid #d9d9d9;
}

.crumb {
  width: 5px;
  height: 8px;
  margin: 0 9px 0 10px;
}

.history {
  margin: 0 4px 0 auto;
}

.reload {
  display: flex;
  align-items: center;
  justify-content: center;
  width: 25px;
  height: 20px;
  border-left: 1px solid #d9d9d9;
}

.reload svg, .search svg {
  width: 12px;
  height: 12px;
}

.search {
  display: flex;
  align-items: center;
  width: 202px;
  height: 22px;
  margin-left: 12px;
  padding: 0 8px;
  border: 1px solid #d9d9d9;
}

.search input {
  flex: 1;
  min-width: 0;
  padding: 0;
  border: 0;
}

.search input::placeholder {
  color: #6d6d6d;
  opacity: 1;
}

.ex-main {
  display: flex;
  flex: 1;
  min-height: 0;
  overflow: hidden;
  padding-top: 1px;
}

.places {
  width: 140px;
  overflow: hidden;
}

.places li {
  display: flex;
  align-items: center;
  gap: 5px;
  height: 21px;
  white-space: nowrap;
}

.places svg {
  width: 16px;
  height: 16px;
}

.places .l1 { padding-left: 20px; }
.places .l2 { padding-left: 30px; }
.places .l3 { padding-left: 39px; }

.places .current {
  background: #f6f6f6;
  border: 1px solid #e6e6e6;
}

.places-scroll .thumb {
  height: 81px;
  margin-top: 84px;
}

.files {
  position: relative;
  flex: 1;
  margin-left: 2px;
  border-left: 1px solid #f0f0f0;
}

.sort {
  position: absolute;
  left: 138px;
  top: 1px;
  width: 8px;
  height: 4px;
}

.files table {
  width: 100%;
  table-layout: fixed;
  border-collapse: separate;
  border-spacing: 0;
}

.files th, .files td {
  height: 21px;
  padding: 0 0 0 6px;
  text-align: left;
  font-weight: normal;
  color: #6d6d6d;
  line-height: 16px;
  white-space: nowrap;
}

.files tbody::before {
  content: "";
  display: block;
  height: 10px;
}

.files th {
  width: 120px;
  padding-top: 4px;
  border-right: 1px solid #e3e8ee;
  color: #4c607a;
}

.files th:first-child {
  width: 273px;
  padding-left: 19px;
}

.files th:nth-child(4) {
  width: 80px;
}

.files th:last-child {
  width: auto;
  border: 0;
}

.files .name {
  padding-left: 21px;
  color: #111;
}

.name .fold {
  float: left;
  margin-right: 5px;
}

.files-scroll {
  margin-right: 1px;
}

.files-scroll .thumb {
  height: 64px;
}

/* taskbar */
.taskbar {
  position: relative;
  display: flex;
  justify-content: space-between;
  height: 40px;
  padding: 1px 26px 1px 17px;
  background: rgba(84, 66, 148, 0.76);
  border-top: 1px solid rgba(60, 44, 120, 0.6);
}

.apps {
  display: flex;
  gap: 4px;
}

.apps button {
  display: flex;
  align-items: center;
  justify-content: center;
  width: 58px;
}

.apps svg {
  width: 32px;
  height: 32px;
}

.apps .open {
  border: 1px solid rgba(255, 255, 255, 0.4);
  background: rgba(255, 255, 255, 0.18);
}

.apps .active {
  border-color: #d6cfe8;
  background: rgba(255, 255, 255, 0.4);
}

.tray {
  display: flex;
  align-items: center;
  gap: 8px;
  color: #fff;
}

.tray svg {
  width: 16px;
  height: 16px;
}

.tray .tray-caret {
  width: 6px;
  height: 4px;
  margin-right: 6px;
}

.clock {
  margin-left: 10px;
  line-height: 17px;
  text-align: center;
}

/* pointers */
.mark {
  position: absolute;
  font-size: 30px;
  line-height: 30px;
  color: #000;
}

.mark1 { left: 328px; top: 350px; }
.mark2 { left: 291px; top: 527px; }
.mark3 { left: 48px; top: 635px; }

.pointer {
  position: absolute;
  fill: none;
  stroke: #000;
  stroke-width: 5px;
  stroke-linejoin: round;
}

.pointer1 { left: 377px; top: 346px; width: 110px; height: 40px; }
.pointer2 { left: 356px; top: 523px; width: 140px; height: 44px; }
.pointer3 { left: 173px; top: 635px; width: 150px; height: 52px; }
```
